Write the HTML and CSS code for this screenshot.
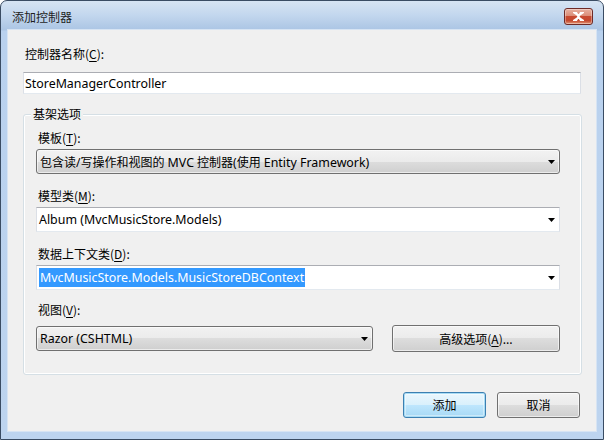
FILE: index.html
```html
<!DOCTYPE html>
<html lang="zh-CN">
<head>
<meta charset="utf-8">
<title>添加控制器</title>
<link rel="stylesheet" href="styles.css">
</head>
<body>
<div class="window">
  <div class="titlebar">
    <span class="title">添加控制器</span>
    <div class="close">
      <svg width="11" height="9" viewBox="0 0 11 9"><path d="M1 0.5 L5.5 3.5 L10 0.5 M1 8.5 L5.5 5.5 L10 8.5 M3 0.5 L8 8.5 M8 0.5 L3 8.5" stroke="#fff" stroke-width="2" fill="none" stroke-linecap="square"/></svg>
    </div>
  </div>
  <div class="client">
    <div class="label top">控制器名称(<u>C</u>):</div>
    <div class="textbox lat">StoreManagerController</div>

    <div class="group">
      <div class="group-title">基架选项</div>

      <div class="label first">模板(<u>T</u>):</div>
      <div class="combo btnstyle">
        <span>包含读/写操作和视图的 <span class="lat">MVC</span> 控制器(使用 <span class="lat">Entity Framework)</span></span>
        <svg class="arrow" width="7" height="4" viewBox="0 0 7 4"><path d="M0 0H7L3.5 4Z" fill="#000"/></svg>
      </div>

      <div class="label">模型类(<u>M</u>):</div>
      <div class="combo edit lat">
        <span>Album (MvcMusicStore.Models)</span>
        <svg class="arrow" width="7" height="4" viewBox="0 0 7 4"><path d="M0 0H7L3.5 4Z" fill="#000"/></svg>
      </div>

      <div class="label">数据上下文类(<u>D</u>):</div>
      <div class="combo edit lat">
        <span class="selected">MvcMusicStore.Models.MusicStoreDBContext</span>
        <svg class="arrow" width="7" height="4" viewBox="0 0 7 4"><path d="M0 0H7L3.5 4Z" fill="#000"/></svg>
      </div>

      <div class="label view-label">视图(<u>V</u>):</div>
      <div class="row">
        <div class="combo btnstyle view lat">
          <span>Razor (CSHTML)</span>
          <svg class="arrow" width="7" height="4" viewBox="0 0 7 4"><path d="M0 0H7L3.5 4Z" fill="#000"/></svg>
        </div>
        <div class="button adv">高级选项(<u>A</u>)...</div>
      </div>
    </div>

    <div class="footer">
      <div class="button default">添加</div>
      <div class="button">取消</div>
    </div>
  </div>
</div>
</body>
</html>
```

FILE: styles.css
```css
html, body {
  margin: 0;
  padding: 0;
  background: #ffffff;
}

body {
  font-family: "Noto Sans", "Noto Sans CJK SC", sans-serif;
  font-size: 12px;
  color: #000;
}

.lat {
  font-size: 12.4px;
}

.window {
  width: 604px;
  height: 440px;
  box-sizing: border-box;
  border: 1px solid #3a4c63;
  border-radius: 7px 7px 0 0;
  background: linear-gradient(#d6e4f3 0px, #c3d7ee 14px, #abc5e4 29px, #b9d1ee 30px, #bdd4ef 100%);
  padding: 0 7px 8px;
  display: flex;
  flex-direction: column;
  overflow: hidden;
}

.titlebar {
  height: 29px;
  flex: none;
  display: flex;
  align-items: center;
  justify-content: space-between;
  padding-left: 4px;
}

.title {
  font-family: "Noto Sans CJK SC", sans-serif;
  font-size: 12px;
  line-height: 16px;
  color: #1e1e1e;
  margin-top: 3px;
}

.close {
  width: 29px;
  height: 17px;
  box-sizing: border-box;
  margin-right: 3px;
  margin-top: 2px;
  border: 1px solid #6e2a26;
  border-radius: 3px;
  background: linear-gradient(#e7b0a0 0%, #dc8e78 45%, #c84a30 50%, #c4492f 78%, #e59a7a 100%);
  display: flex;
  align-items: center;
  justify-content: center;
  box-shadow: inset 0 0 0 1px rgba(255, 255, 255, 0.35);
}

.client {
  flex: 1;
  background: #f0f0f0;
  padding: 16px 15px 0 15px;
  display: flex;
  flex-direction: column;
  box-shadow: 0 0 0 1px #d7e4f3;
}

.label {
  height: 16px;
  line-height: 16px;
  padding-left: 2px;
  font-family: "Noto Sans CJK SC", sans-serif;
  white-space: nowrap;
}

.label u {
  text-decoration: underline;
  text-underline-offset: 2px;
}

.textbox {
  margin-top: 10px;
  height: 22px;
  box-sizing: border-box;
  background: #fff;
  border: 1px solid #dbdfe6;
  border-top-color: #abadb3;
  border-bottom-color: #e3e9ef;
  padding-left: 1px;
  line-height: 21px;
  white-space: nowrap;
}

.group {
  margin-top: 20px;
  margin-right: -1px;
  height: 261px;
  box-sizing: border-box;
  border: 1px solid #d5dfe5;
  border-radius: 3px;
  box-shadow: inset 0 0 0 1px #ffffff;
  padding: 0 21px 0 12px;
  display: flex;
  flex-direction: column;
}

.group-title {
  width: fit-content;
  margin-top: -9px;
  margin-left: -5px;
  padding: 0 2px;
  height: 16px;
  line-height: 16px;
  background: #f0f0f0;
  font-family: "Noto Sans CJK SC", sans-serif;
}

.group .label {
  margin-top: 14px;
}

.group .label.first {
  margin-top: 8px;
}

.group .label.view-label {
  margin-top: 12px;
}

.combo {
  margin-top: 3px;
  height: 25px;
  box-sizing: border-box;
  display: flex;
  align-items: center;
  justify-content: space-between;
  padding: 0 4px 0 3px;
  white-space: nowrap;
}

.combo .arrow {
  flex: none;
}

.btnstyle {
  border: 1px solid #707070;
  border-radius: 3px;
  background: linear-gradient(#f2f2f2 0%, #ebebeb 50%, #dddddd 50%, #cfcfcf 100%);
  box-shadow: inset 0 0 0 1px rgba(255, 255, 255, 0.6);
}

.edit {
  background: #fff;
  border: 1px solid #dbdfe6;
  border-top-color: #abadb3;
  border-bottom-color: #e3e9ef;
  padding-left: 2px;
}

.selected {
  background: #3399ff;
  color: #fff;
  line-height: 19px;
  padding: 0 1px;
}

.row {
  margin-top: 7px;
  display: flex;
  align-items: center;
  gap: 19px;
}

.row .view {
  margin-top: 0;
  width: 337px;
}

.button {
  height: 26px;
  box-sizing: border-box;
  border: 1px solid #707070;
  border-radius: 3px;
  background: linear-gradient(#f2f2f2 0%, #ebebeb 50%, #dddddd 50%, #cfcfcf 100%);
  box-shadow: inset 0 0 0 1px rgba(255, 255, 255, 0.6);
  display: flex;
  align-items: center;
  justify-content: center;
  font-family: "Noto Sans CJK SC", sans-serif;
  line-height: 16px;
  white-space: nowrap;
}

.button u {
  text-decoration: underline;
  text-underline-offset: 2px;
}

.adv {
  width: 168px;
  height: 27px;
}

.footer {
  margin-top: 17px;
  display: flex;
  justify-content: flex-end;
  gap: 11px;
  padding-right: 1px;
}

.footer .button {
  width: 83px;
}

.default {
  border-color: #3c7fb1;
  box-shadow: inset 0 0 0 1px #a8dcf5, inset 0 0 0 2px rgba(255, 255, 255, 0.4);
  background: linear-gradient(#eaf6fd 0%, #d9f0fc 50%, #bee6fd 50%, #a7d9f5 100%);
}
```
